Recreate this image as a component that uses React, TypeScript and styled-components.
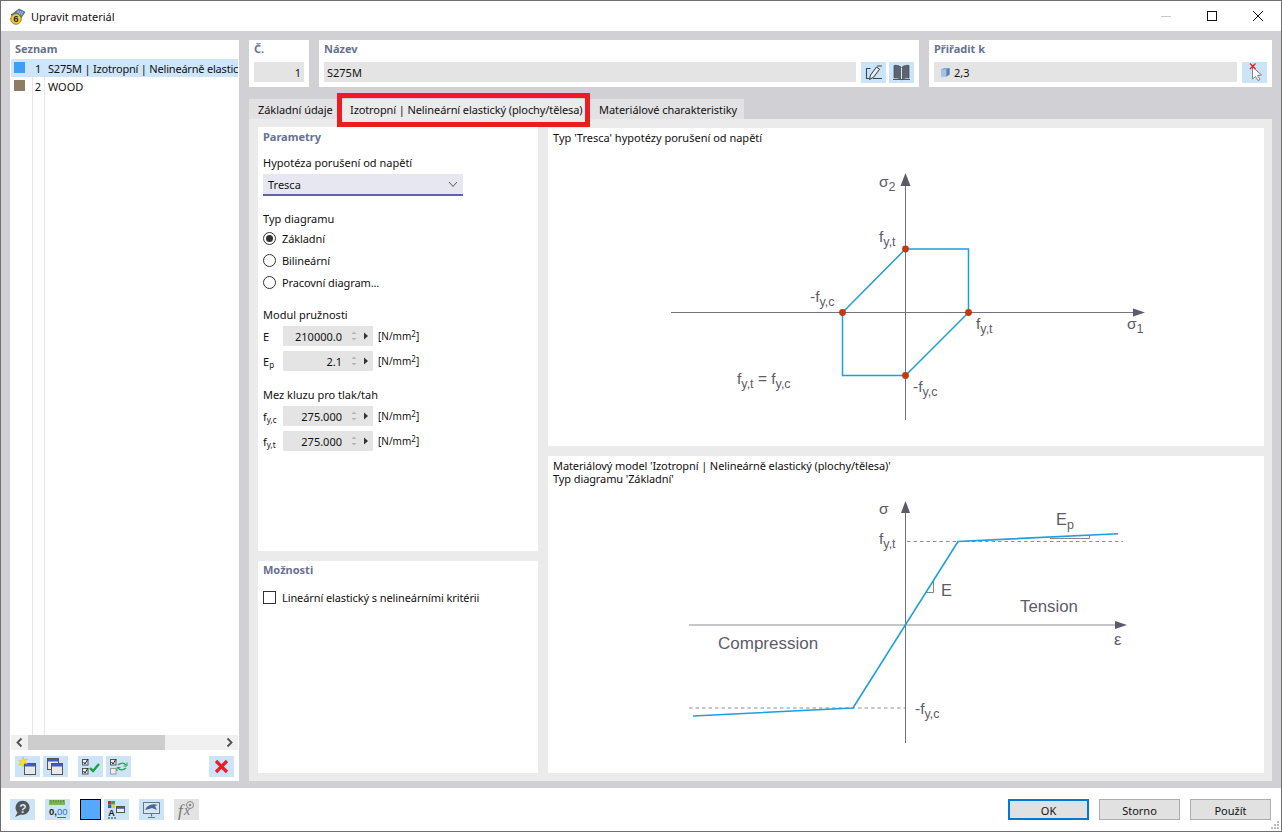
import React from "react";
import styled, { createGlobalStyle } from "styled-components";

const Global = createGlobalStyle`
  html, body { margin: 0; padding: 0; background: #fff; }
  * { box-sizing: border-box; }
  body { font-family: "Noto Sans", "Open Sans", sans-serif; font-size: 11px; color: #111; }
`;

const Win = styled.div`
  width: 1282px; height: 832px; display: flex; flex-direction: column;
  border: 1px solid #6f6f6f; background: #fff; overflow: hidden;
`;
const TitleBar = styled.div`
  height: 30px; flex: none; display: flex; align-items: center; padding-left: 8px; background: #fff;
`;
const TitleText = styled.span`
  font-size: 11px; margin-left: 5px; flex: 1; color: #111;
`;
const WinBtn = styled.div`
  width: 46px; height: 30px; display: flex; align-items: center; justify-content: center;
`;
const Body = styled.div`
  flex: 1; min-height: 0; background: #d0d0d5; display: flex; gap: 10px; padding: 9px 9px 7px 9px;
`;
const Card = styled.div`
  background: #fff; display: flex; flex-direction: column;
`;
const LeftPanel = styled(Card)`
  width: 229px; flex: none; padding: 0 1px 4px 1px;
`;
const SectionTitle = styled.div`
  font-weight: 700; font-size: 11px; line-height: 18px; color: #66718f; padding-left: 4px; flex: none;
`;
const List = styled.div`
  flex: 1; min-height: 0; margin-top: 1px;
  background:
    linear-gradient(#e6e6e6, #e6e6e6) 21px 0 / 1px 100% no-repeat,
    linear-gradient(#e6e6e6, #e6e6e6) 33px 0 / 1px 100% no-repeat;
`;
const Row = styled.div<{ $sel?: boolean }>`
  height: 18px; display: flex; align-items: center; white-space: nowrap; overflow: hidden;
  width: 227px; background: ${p => (p.$sel ? "#cde6fb" : "transparent")};
  letter-spacing: ${p => (p.$sel ? "-0.2px" : "0")};
`;
const Swatch = styled.span<{ $c: string }>`
  width: 11px; height: 11px; margin: -1px 0 0 3px; background: ${p => p.$c}; flex: none;
`;
const RowNum = styled.span`
  width: 16px; text-align: right; flex: none; margin-right: 7px;
`;
const Scroll = styled.div`
  height: 15px; width: 227px; background: #f0f0f0; display: flex; align-items: center; flex: none;
`;
const ScrollEnd = styled.div`
  width: 17px; height: 15px; display: flex; align-items: center; justify-content: center; flex: none;
`;
const Thumb = styled.div`
  width: 137px; height: 15px; background: #cdcdcd; flex: none;
`;
const ScrollGap = styled.div`flex: 1;`;
const ListTools = styled.div`
  display: flex; height: 21px; margin-top: 6px; padding-left: 4px; flex: none;
`;
const IconBtn = styled.div<{ $ml?: number; $off?: boolean }>`
  width: 25px; height: 21px; flex: none; margin-left: ${p => p.$ml ?? 0}px;
  background: ${p => (p.$off ? "#e3e3e3" : "#cbe4f8")};
  display: flex; align-items: center; justify-content: center;
`;
const Right = styled.div`
  flex: 1; min-width: 0; display: flex; flex-direction: column;
`;
const TopRow = styled.div`
  display: flex; gap: 10px; height: 47px; flex: none;
`;
const TopCard = styled(Card)<{ $w?: number }>`
  ${p => (p.$w ? `width:${p.$w}px;flex:none;` : "flex:1;")} padding: 0 5px;
`;
const TopTitle = styled(SectionTitle)`
  padding-left: 0; line-height: 18px; flex: none;
`;
const FieldRow = styled.div`
  display: flex; height: 20px; margin-top: 4px; align-items: stretch;
`;
const Field = styled.div<{ $right?: boolean }>`
  flex: 1; min-width: 0; background: #e4e4e4; display: flex; align-items: center; padding: 0 3px;
  justify-content: ${p => (p.$right ? "flex-end" : "flex-start")};
`;
const CubeWrap = styled.span`
  display: inline-flex; margin: 0 4px 0 3px;
`;
const TabStrip = styled.div`
  display: flex; height: 20px; margin-top: 12px; flex: none;
`;
const Tab = styled.div<{ $w: number; $active?: boolean }>`
  position: relative; width: ${p => p.$w}px; flex: none; padding-left: ${p => (p.$active ? 12 : 9)}px;
  line-height: 21px; white-space: nowrap; background: ${p => (p.$active ? "#ebebeb" : "#e2e2e4")};
  letter-spacing: ${p => (p.$active ? "-0.1px" : "-0.05px")};
`;
const Highlight = styled.div`
  position: absolute; top: -6px; bottom: -8px; left: -1px; right: 0; border: 5px solid #ed1c24; pointer-events: none;
`;
const TabBody = styled.div`
  flex: 1; min-height: 0; background: #ebebeb; display: flex; gap: 10px; padding: 8px 8px 8px 9px;
`;
const LeftCol = styled.div`
  width: 280px; flex: none; display: flex; flex-direction: column; gap: 10px;
`;
const RightCol = styled.div`
  flex: 1; min-width: 0; display: flex; flex-direction: column; gap: 10px; padding-top: 1px;
`;
const ParamCard = styled(Card)`
  height: 424px; flex: none; padding: 1px 5px 0;
`;
const OptCard = styled(Card)`
  flex: 1; padding: 0 5px;
`;
const Label = styled.div<{ $mt: number }>`
  margin-top: ${p => p.$mt}px; line-height: 16px; height: 16px;
`;
const Select = styled.div`
  width: 200px; height: 22px; margin-top: 3px; background: #e7e7f1; border-bottom: 2px solid #6660a6;
  display: flex; align-items: center; justify-content: space-between; padding: 0 5px;
`;
const Choice = styled.div<{ $mt: number }>`
  margin-top: ${p => p.$mt}px; height: 16px; display: flex; align-items: center; gap: 6px; letter-spacing: -0.1px;
`;
const Radio = styled.span<{ $on?: boolean }>`
  width: 13px; height: 13px; border-radius: 50%; border: 1px solid #333; flex: none;
  display: flex; align-items: center; justify-content: center;
  &::after { content: ""; width: 7px; height: 7px; border-radius: 50%; background: ${p => (p.$on ? "#333" : "transparent")}; }
`;
const Check = styled.span`
  width: 13px; height: 13px; border: 1px solid #333; flex: none;
`;
const NumRow = styled.div<{ $mt: number }>`
  margin-top: ${p => p.$mt}px; display: flex; align-items: center; height: 20px;
`;
const NumName = styled.span`
  width: 20px; flex: none; white-space: nowrap;
  sub { font-size: 8px; vertical-align: baseline; position: relative; top: 2px; }
`;
const NumBox = styled.div`
  width: 90px; height: 20px; background: #e4e4e4; display: flex; align-items: center; flex: none;
`;
const NumVal = styled.span`
  width: 59px; text-align: right; flex: none;
`;
const Spin = styled.span`
  width: 13px; margin-left: 8px; flex: none; display: flex;
`;
const Unit = styled.span`
  margin-left: 5px; font-size: 10px; white-space: nowrap;
  sup { font-size: 8px; vertical-align: baseline; position: relative; top: -3px; }
`;
const DiagramCard = styled(Card)<{ $h: number }>`
  height: ${p => p.$h}px; flex: none;
`;
const DiagramTitle = styled.div<{ $h: number; $tight?: boolean }>`
  height: ${p => p.$h}px; padding: 3px 0 0 5px; line-height: 13px; flex: none; font-size: 11px;
  letter-spacing: ${p => (p.$tight ? "-0.1px" : "0")};
`;
const DiagramSvg = styled.svg`
  display: block; flex: 1; min-height: 0; width: 100%;
`;
const Footer = styled.div`
  height: 43px; flex: none; display: flex; align-items: flex-start; padding: 11px 10px 0 9px; position: relative;
`;
const ColorBtn = styled.div`
  width: 21px; height: 21px; margin-left: 10px; border: 1px solid #000; background: #55a9ff; flex: none;
`;
const Spacer = styled.div`flex: 1;`;
const DlgBtn = styled.div<{ $def?: boolean }>`
  width: 81px; height: 21px; margin-left: ${p => (p.$def ? 0 : 10)}px; padding-top: 1px; flex: none;
  background: #e1e1e1; border: ${p => (p.$def ? "2px solid #0078d7" : "1px solid #adadad")};
  display: flex; align-items: center; justify-content: center;
`;
const Grip = styled.svg`
  position: absolute; right: 1px; bottom: 1px;
`;

const Ink = "#5c5c68";
const Axis = "#74747f";

const Sym: React.FC<{ x: number; y: number; base: string; sub?: string; size?: number; subSize?: number; tail?: React.ReactNode }> = ({ x, y, base, sub, size = 15.5, subSize = 12.5, tail }) => (
  <text x={x} y={y} fontFamily="Liberation Sans, Arial, sans-serif" fontSize={size} fill={Ink}>
    {base}
    {sub && <tspan dy={3.5} fontSize={subSize}>{sub}</tspan>}
    {tail}
  </text>
);

const TrescaDiagram = () => (
  <DiagramSvg viewBox="548 150 716 296" preserveAspectRatio="xMinYMin">
    <path d="M671 312.5H1134" stroke={Axis} fill="none" />
    <path d="M905.5 420V185" stroke={Axis} fill="none" />
    <path d="M1145 312.5L1133 308.5V316.5Z" fill="#5a5a6a" />
    <path d="M905.5 173L900.5 186H910.5Z" fill="#5a5a6a" />
    <path d="M905.5 249H968.5V312.5L905.5 375.5H842.5V312.5Z" fill="none" stroke="#1c9fdd" strokeWidth="1.5" />
    <circle cx="905.5" cy="249" r="3.4" fill="#c4380c" />
    <circle cx="968.5" cy="312.5" r="3.4" fill="#c4380c" />
    <circle cx="842.5" cy="312.5" r="3.4" fill="#c4380c" />
    <circle cx="905.5" cy="375.5" r="3.4" fill="#c4380c" />
    <Sym x={879} y={187} base="σ" sub="2" />
    <Sym x={879} y={242} base="f" sub="y,t" />
    <Sym x={810} y={302} base="-f" sub="y,c" />
    <Sym x={976} y={329} base="f" sub="y,t" />
    <Sym x={1127} y={329} base="σ" sub="1" />
    <Sym x={737} y={384} base="f" sub="y,t" tail={<><tspan dy={-3.5}> = f</tspan><tspan dy={3.5} fontSize={12.5}>y,c</tspan></>} />
    <Sym x={913} y={392} base="-f" sub="y,c" />
  </DiagramSvg>
);

const ModelDiagram = () => (
  <DiagramSvg viewBox="548 490 716 283" preserveAspectRatio="xMinYMin">
    <path d="M689 625H1116" stroke="#8b8b94" fill="none" />
    <path d="M905.5 743V512" stroke={Axis} fill="none" />
    <path d="M1127 625L1115 621V629Z" fill="#5a5a6a" />
    <path d="M905.5 501L901 513H910Z" fill="#5a5a6a" />
    <path d="M907 541.5H1123M689 708H905" stroke="#8f8f98" strokeDasharray="3.5 3" fill="none" />
    <path d="M933.5 581V592.5H926M1089.5 535.5V538.5H1050" stroke="#85858e" fill="none" />
    <path d="M693 716L853 708L958 541.5L1118 533.7" stroke="#1c9fdd" strokeWidth="1.6" fill="none" />
    <Sym x={879} y={514} base="σ" />
    <Sym x={879} y={544} base="f" sub="y,t" />
    <Sym x={941} y={596} base="E" size={16.4} />
    <Sym x={1056} y={525} base="E" sub="p" size={16.4} />
    <Sym x={1020} y={612} base="Tension" size={16.8} />
    <Sym x={718} y={649} base="Compression" size={17} />
    <Sym x={1114} y={645} base="ε" size={16.4} />
    <Sym x={915} y={714} base="-f" sub="y,c" />
  </DiagramSvg>
);

const Svg: React.FC<{ children: React.ReactNode; w?: number; h?: number }> = ({ children, w = 25, h = 21 }) => (
  <svg width={w} height={h} viewBox={`0 0 ${w} ${h}`}>{children}</svg>
);

const MiniWin: React.FC<{ x: number; y: number; w?: number; h?: number }> = ({ x, y, w = 11, h = 11 }) => (
  <g>
    <rect x={x + 0.5} y={y + 0.5} width={w} height={h} fill="#e9e9e9" stroke="#555" />
    <rect x={x + 1} y={y + 1} width={w - 1} height={2.5} fill="#3a5fc0" />
  </g>
);

const CheckBoxMini: React.FC<{ x: number; y: number; on?: boolean }> = ({ x, y, on }) => (
  <g>
    <rect x={x + 0.5} y={y + 0.5} width={5.5} height={5.5} fill="#eee" stroke={on ? "#555" : "#999"} />
    {on && <path d={`M${x + 1.5} ${y + 3}l1.5 2 3-5`} stroke="#222" fill="none" />}
  </g>
);

const AppIcon = () => (
  <Svg w={17} h={17}>
    <path d="M2 7L10 1l6 3-4 6z" fill="#5c7fa8" stroke="#33465e" strokeWidth=".6" />
    <path d="M9.5 2.5l-1 3M11.5 3l-1 3.5M13.5 3.5l-1 3.5" stroke="#c8d8ec" strokeWidth=".8" />
    <circle cx="7" cy="11" r="5.3" fill="#f1cb2c" stroke="#6f5f17" strokeWidth=".7" />
    <text x="7" y="14.4" textAnchor="middle" fontSize="9.5" fontWeight="700" fontFamily="Liberation Sans" fill="#2a2a2a">6</text>
  </Svg>
);

const IconHelp = () => (
  <Svg>
    <path d="M5 18l2.5-4.5a7 7 0 1 1 3.5 2z" fill="#555" />
    <text x="13" y="14" textAnchor="middle" fontSize="12" fontWeight="700" fontFamily="Liberation Sans" fill="#cbe4f8">?</text>
  </Svg>
);
const IconUnits = () => (
  <Svg>
    <rect x="4" y="1" width="16" height="5" fill="#7fb55a" />
    <path d="M6 1v3M8.5 1v2M11 1v3M13.5 1v2M16 1v3M18.5 1v2" stroke="#4a7d33" strokeWidth=".7" />
    <text x="4" y="16" fontSize="9.5" fontWeight="700" fontFamily="Liberation Sans" fill="#222">0,</text>
    <text x="12" y="16" fontSize="9.5" fontFamily="Liberation Sans" fill="#2f6fd0">00</text>
    <path d="M12 18.5h9" stroke="#2f6fd0" />
  </Svg>
);
const IconPalette = () => (
  <Svg>
    <rect x="4" y="2" width="3.5" height="3.5" fill="#d22" />
    <rect x="7.5" y="2" width="3.5" height="3.5" fill="#2a5" />
    <rect x="4" y="5.5" width="3.5" height="3.5" fill="#26c" />
    <rect x="7.5" y="5.5" width="3.5" height="3.5" fill="#ec2" />
    <text x="7.5" y="16.5" textAnchor="middle" fontSize="9" fontWeight="700" fontFamily="Liberation Sans" fill="#222">A</text>
    <path d="M4 19h8" stroke="#333" strokeDasharray="2 1" />
    <rect x="12.5" y="7.5" width="8" height="6" fill="#eee" stroke="#555" />
    <rect x="13" y="8" width="7" height="1.8" fill="#3a5fc0" />
  </Svg>
);
const IconScreen = () => (
  <Svg>
    <rect x="4.5" y="3.5" width="16" height="11" fill="#d9e6f1" stroke="#67788a" />
    <path d="M6 11c2-5 7-7 13-5l-3 1 2 4-5-2-3 1z" fill="#45699a" />
    <path d="M12.5 15v2.5M9 18.5h7" stroke="#67788a" strokeWidth="1.2" />
  </Svg>
);
const IconFx = () => (
  <Svg>
    <text x="4" y="17" fontSize="17" fontStyle="italic" fontFamily="Liberation Serif" fill="#777">f</text>
    <text x="10" y="16" fontSize="14" fontStyle="italic" fontFamily="Liberation Serif" fill="#777">x</text>
    <circle cx="16" cy="6" r="3.5" fill="none" stroke="#888" />
    <circle cx="16" cy="6" r="1.3" fill="#888" />
  </Svg>
);
const IconNew = () => (
  <Svg>
    <MiniWin x={9} y={7} w={11} h={11} />
    <path d="M8 1l1.2 3 3-.8-1.8 2.4 1.8 2.4-3-.6L8 11 6.8 8.4l-3 .6 1.8-2.4-1.8-2.4 3 .8z" fill="#f7e61a" stroke="#c9b200" strokeWidth=".4" />
  </Svg>
);
const IconCopy = () => (
  <Svg>
    <MiniWin x={4} y={2} w={11} h={11} />
    <MiniWin x={8} y={7} w={11} h={11} />
  </Svg>
);
const IconCheckAll = () => (
  <Svg>
    <CheckBoxMini x={4} y={3} on />
    <CheckBoxMini x={4} y={12} on />
    <path d="M12 12l3 3 6-7" stroke="#1aa23c" strokeWidth="2.4" fill="none" />
  </Svg>
);
const IconCheckSwap = () => (
  <Svg>
    <CheckBoxMini x={4} y={3} on />
    <CheckBoxMini x={4} y={12} />
    <path d="M12 9c3-2.5 6-2.5 8 0M20 12c-3 2.5-6 2.5-8 0" stroke="#2da24a" strokeWidth="1.4" fill="none" />
    <path d="M21 6.5v3.5h-3.5M11 15v-3.5h3.5" stroke="#2da24a" fill="none" />
  </Svg>
);
const IconDelete = () => (
  <Svg>
    <path d="M7 5l11 11M18 5L7 16" stroke="#ee1c25" strokeWidth="3.2" />
  </Svg>
);
const IconPen = () => (
  <Svg>
    <path d="M9.5 6.5H5.5V16.5H8M12 16.5H21M16 4H21" stroke="#3f4650" strokeWidth="1.1" fill="none" />
    <path d="M8.5 17.5l1-4.5 6-8 3 2.3-6 8z" fill="#e8eef4" stroke="#333" strokeWidth="1" />
  </Svg>
);
const IconBook = () => (
  <Svg>
    <path d="M12.5 5.5C10.5 3.5 7 3 5 3.5V16c2-.4 5.5 0 7.5 1.7C14.5 16 18 15.6 20 16V3.5C18 3 14.5 3.5 12.5 5.5z" fill="#5c6470" stroke="#3f4650" strokeWidth=".7" />
    <path d="M12.5 5.5v12" stroke="#d8e6f2" strokeWidth="1" />
    <path d="M4 17.5h17" stroke="#555" />
  </Svg>
);
const IconPick = () => (
  <Svg>
    <path d="M10.5 5l0 12 3-2.5 2.5 4 2-1-2.5-4 4-.5z" fill="#fff" stroke="#777" strokeWidth=".9" />
    <path d="M8 1.5l5.500 5.500M13.500 1.500L8 7" stroke="#e81c24" strokeWidth="1.3" />
  </Svg>
);
const IconCube = () => (
  <Svg w={10} h={10}>
    <path d="M1 2.5L4 1h5.5v6.5L6.5 9.5H1z" fill="#7ea6d6" />
    <path d="M1 2.5h5.5v7H1z" fill="#a4c2e6" />
    <path d="M6.5 2.5L9.5 1v6.5l-3 2z" fill="#5f7fa8" />
  </Svg>
);
const Chevron: React.FC<{ dir: "l" | "r" }> = ({ dir }) => (
  <Svg w={9} h={11}>
    <path d={dir === "l" ? "M6.5 1.5L2.5 5.5l4 4" : "M2.5 1.5l4 4-4 4"} stroke="#505050" strokeWidth="1.8" fill="none" />
  </Svg>
);
const SpinIcon = () => (
  <Svg w={8} h={14}>
    <path d="M4 2.5L1.5 5h5zM4 11.5L1.5 9h5z" fill="#b4b4b4" />
  </Svg>
);
const NextIcon = () => (
  <Svg w={6} h={8}>
    <path d="M1 0.5L5 4 1 7.5z" fill="#333" />
  </Svg>
);

const NumField: React.FC<{ mt: number; name: React.ReactNode; value: string }> = ({ mt, name, value }) => (
  <NumRow $mt={mt}>
    <NumName>{name}</NumName>
    <NumBox>
      <NumVal>{value}</NumVal>
      <Spin><SpinIcon /></Spin>
      <NextIcon />
    </NumBox>
    <Unit>[N/mm<sup>2</sup>]</Unit>
  </NumRow>
);

export default function App() {
  return (
    <Win>
      <Global />
      <TitleBar>
        <AppIcon />
        <TitleText>Upravit materiál</TitleText>
        <WinBtn>
          <Svg w={12} h={12}><path d="M1 6.5h10" stroke="#c8c8c8" /></Svg>
        </WinBtn>
        <WinBtn>
          <Svg w={12} h={12}><rect x="1.5" y="1.5" width="9" height="9" fill="none" stroke="#111" /></Svg>
        </WinBtn>
        <WinBtn>
          <Svg w={12} h={12}><path d="M1 1l10 10M11 1L1 11" stroke="#111" /></Svg>
        </WinBtn>
      </TitleBar>
      <Body>
        <LeftPanel>
          <SectionTitle>Seznam</SectionTitle>
          <List>
            <Row $sel>
              <Swatch $c="#3f9ff5" />
              <RowNum>1</RowNum>
              <span>S275M | Izotropní | Nelineárně elastic</span>
            </Row>
            <Row>
              <Swatch $c="#8f7c66" />
              <RowNum>2</RowNum>
              <span>WOOD</span>
            </Row>
          </List>
          <Scroll>
            <ScrollEnd><Chevron dir="l" /></ScrollEnd>
            <Thumb />
            <ScrollGap />
            <ScrollEnd><Chevron dir="r" /></ScrollEnd>
          </Scroll>
          <ListTools>
            <IconBtn><IconNew /></IconBtn>
            <IconBtn $ml={3}><IconCopy /></IconBtn>
            <IconBtn $ml={10}><IconCheckAll /></IconBtn>
            <IconBtn $ml={3}><IconCheckSwap /></IconBtn>
            <IconBtn $ml={78}><IconDelete /></IconBtn>
          </ListTools>
        </LeftPanel>
        <Right>
          <TopRow>
            <TopCard $w={60}>
              <TopTitle>Č.</TopTitle>
              <FieldRow><Field $right>1</Field></FieldRow>
            </TopCard>
            <TopCard $w={600}>
              <TopTitle>Název</TopTitle>
              <FieldRow>
                <Field>S275M</Field>
                <IconBtn $ml={5}><IconPen /></IconBtn>
                <IconBtn $ml={3}><IconBook /></IconBtn>
              </FieldRow>
            </TopCard>
            <TopCard>
              <TopTitle>Přiřadit k</TopTitle>
              <FieldRow>
                <Field><CubeWrap><IconCube /></CubeWrap>2,3</Field>
                <IconBtn $ml={5}><IconPick /></IconBtn>
              </FieldRow>
            </TopCard>
          </TopRow>
          <TabStrip>
            <Tab $w={89}>Základní údaje</Tab>
            <Tab $w={252} $active>
              Izotropní | Nelineární elastický (plochy/tělesa)
              <Highlight />
            </Tab>
            <Tab $w={154}>Materiálové charakteristiky</Tab>
          </TabStrip>
          <TabBody>
            <LeftCol>
              <ParamCard>
                <TopTitle>Parametry</TopTitle>
                <Label $mt={9}>Hypotéza porušení od napětí</Label>
                <Select>
                  Tresca
                  <Svg w={10} h={7}><path d="M1 1l4 4.5L9 1" stroke="#555" fill="none" /></Svg>
                </Select>
                <Label $mt={15}>Typ diagramu</Label>
                <Choice $mt={3}><Radio $on />Základní</Choice>
                <Choice $mt={6}><Radio />Bilineární</Choice>
                <Choice $mt={6}><Radio />Pracovní diagram...</Choice>
                <Label $mt={17}>Modul pružnosti</Label>
                <NumField mt={3} name="E" value="210000.0" />
                <NumField mt={5} name={<>E<sub>p</sub></>} value="2.1" />
                <Label $mt={16}>Mez kluzu pro tlak/tah</Label>
                <NumField mt={3} name={<>f<sub>y,c</sub></>} value="275.000" />
                <NumField mt={5} name={<>f<sub>y,t</sub></>} value="275.000" />
              </ParamCard>
              <OptCard>
                <TopTitle>Možnosti</TopTitle>
                <Choice $mt={10}><Check />Lineární elastický s nelineárními kritérii</Choice>
              </OptCard>
            </LeftCol>
            <RightCol>
              <DiagramCard $h={318}>
                <DiagramTitle $h={22}>Typ 'Tresca' hypotézy porušení od napětí</DiagramTitle>
                <TrescaDiagram />
              </DiagramCard>
              <DiagramCard $h={317}>
                <DiagramTitle $h={34} $tight>
                  Materiálový model 'Izotropní | Nelineárně elastický (plochy/tělesa)'<br />
                  Typ diagramu 'Základní'
                </DiagramTitle>
                <ModelDiagram />
              </DiagramCard>
            </RightCol>
          </TabBody>
        </Right>
      </Body>
      <Footer>
        <IconBtn><IconHelp /></IconBtn>
        <IconBtn $ml={10}><IconUnits /></IconBtn>
        <ColorBtn />
        <IconBtn $ml={3}><IconPalette /></IconBtn>
        <IconBtn $ml={10}><IconScreen /></IconBtn>
        <IconBtn $ml={10} $off><IconFx /></IconBtn>
        <Spacer />
        <DlgBtn $def>OK</DlgBtn>
        <DlgBtn>Storno</DlgBtn>
        <DlgBtn>Použít</DlgBtn>
        <Grip width="10" height="10" viewBox="0 0 10 10">
          <path d="M7 1h2v2H7zM4 4h2v2H4zM7 4h2v2H7zM1 7h2v2H1zM4 7h2v2H4zM7 7h2v2H7z" fill="#bbb" />
        </Grip>
      </Footer>
    </Win>
  );
}
